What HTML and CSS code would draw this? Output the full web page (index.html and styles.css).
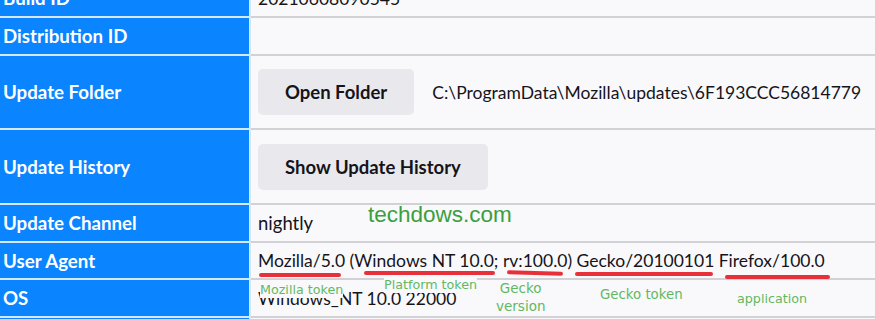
FILE: index.html
```html
<!DOCTYPE html>
<html>
<head>
<meta charset="utf-8">
<link rel="stylesheet" href="styles.css">
</head>
<body>
<div class="page">
  <div class="info">
    <div class="th h-build">Build ID</div><div class="td h-build">20210608090545</div>
    <div class="th h-s">Distribution ID</div><div class="td h-s"></div>
    <div class="th h-l">Update Folder</div><div class="td h-l"><button class="btn">Open Folder</button><span class="path">C:\ProgramData\Mozilla\updates\6F193CCC56814779</span></div>
    <div class="th h-l2">Update History</div><div class="td h-l2"><button class="btn">Show Update History</button></div>
    <div class="th h-s">Update Channel</div><div class="td h-s"><span class="word">nightly</span></div>
    <div class="th h-ua">User Agent</div><div class="td h-ua">Mozilla/5.0 (Windows NT 10.0; rv:100.0) Gecko/20100101 Firefox/100.0</div>
    <div class="th h-s">OS</div><div class="td h-s">Windows_NT 10.0 22000</div>
    <div class="th h-s"></div><div class="td h-s"></div>
  </div>

  <span class="wm">techdows.com</span>

  <span class="stroke s1"></span>
  <span class="stroke s2"></span>
  <span class="stroke s3"></span>
  <span class="stroke s4"></span>
  <span class="stroke s5"></span>

  <span class="note n1">Mozilla token</span>
  <span class="note n2">Platform token</span>
  <span class="note n3">Gecko<br>version</span>
  <span class="note n4">Gecko token</span>
  <span class="note n5">application</span>
</div>
</body>
</html>
```

FILE: styles.css
```css
html, body {
  margin: 0;
  padding: 0;
  background: #f9f9fb;
  overflow: hidden;
}

.page {
  position: relative;
  width: 875px;
  height: 319px;
  overflow: hidden;
  font-family: Lato, "Noto Sans", sans-serif;
  font-size: 17.5px;
  color: #15141a;
}

.info {
  display: grid;
  grid-template-columns: 251px 1fr;
  margin-top: -20px;
}

.th {
  box-sizing: border-box;
  background: #0a84ff;
  color: #fff;
  font-weight: 700;
  font-size: 18.7px;
  padding-left: 3px;
  border-right: 2px solid #d6e8fb;
  border-bottom: 2px solid #d6e8fb;
  display: flex;
  align-items: center;
}

.td {
  box-sizing: border-box;
  background: #f9f9fb;
  padding-left: 7px;
  border-bottom: 2px solid #d2d2d6;
  display: flex;
  align-items: center;
  white-space: nowrap;
}

.word {
  font-size: 18.5px;
}

.h-build { height: 38px; }
.h-s { height: 38px; }
.h-l { height: 74px; }
.h-l2 { height: 75px; }
.h-ua { height: 37px; }

.btn {
  font-family: inherit;
  font-size: 18.5px;
  font-weight: 700;
  color: #15141a;
  background: #e9e9ed;
  border: none;
  border-radius: 5px;
  height: 46px;
  padding: 0 27px;
  margin-right: 18px;
}

.wm {
  position: absolute;
  left: 368px;
  top: 202px;
  font-family: "Liberation Sans", Arial, sans-serif;
  font-size: 22.5px;
  color: #3a9f3e;
}

.stroke {
  position: absolute;
  height: 4px;
  border-radius: 3px;
  background: #e8303a;
}
.s1 { left: 259px; top: 273px; width: 82px; }
.s2 { left: 364px; top: 271px; width: 131px; }
.s3 { left: 507px; top: 271px; width: 56px; transform: rotate(1.5deg); }
.s4 { left: 575px; top: 272px; width: 138px; }
.s5 { left: 725px; top: 275px; width: 105px; }

.note {
  position: absolute;
  font-family: "DejaVu Sans", sans-serif;
  font-size: 12.7px;
  line-height: 17px;
  color: #62b862;
  background: #f9f9fb;
  text-align: center;
  white-space: nowrap;
}
.n1 { left: 260px; top: 281px; }
.n2 { left: 384px; top: 276px; }
.n3 { left: 496px; top: 279px; font-size: 13.5px; line-height: 18px; background: transparent; }
.n4 { left: 600px; top: 286px; font-size: 13.3px; }
.n5 { left: 737px; top: 290px; }
```
